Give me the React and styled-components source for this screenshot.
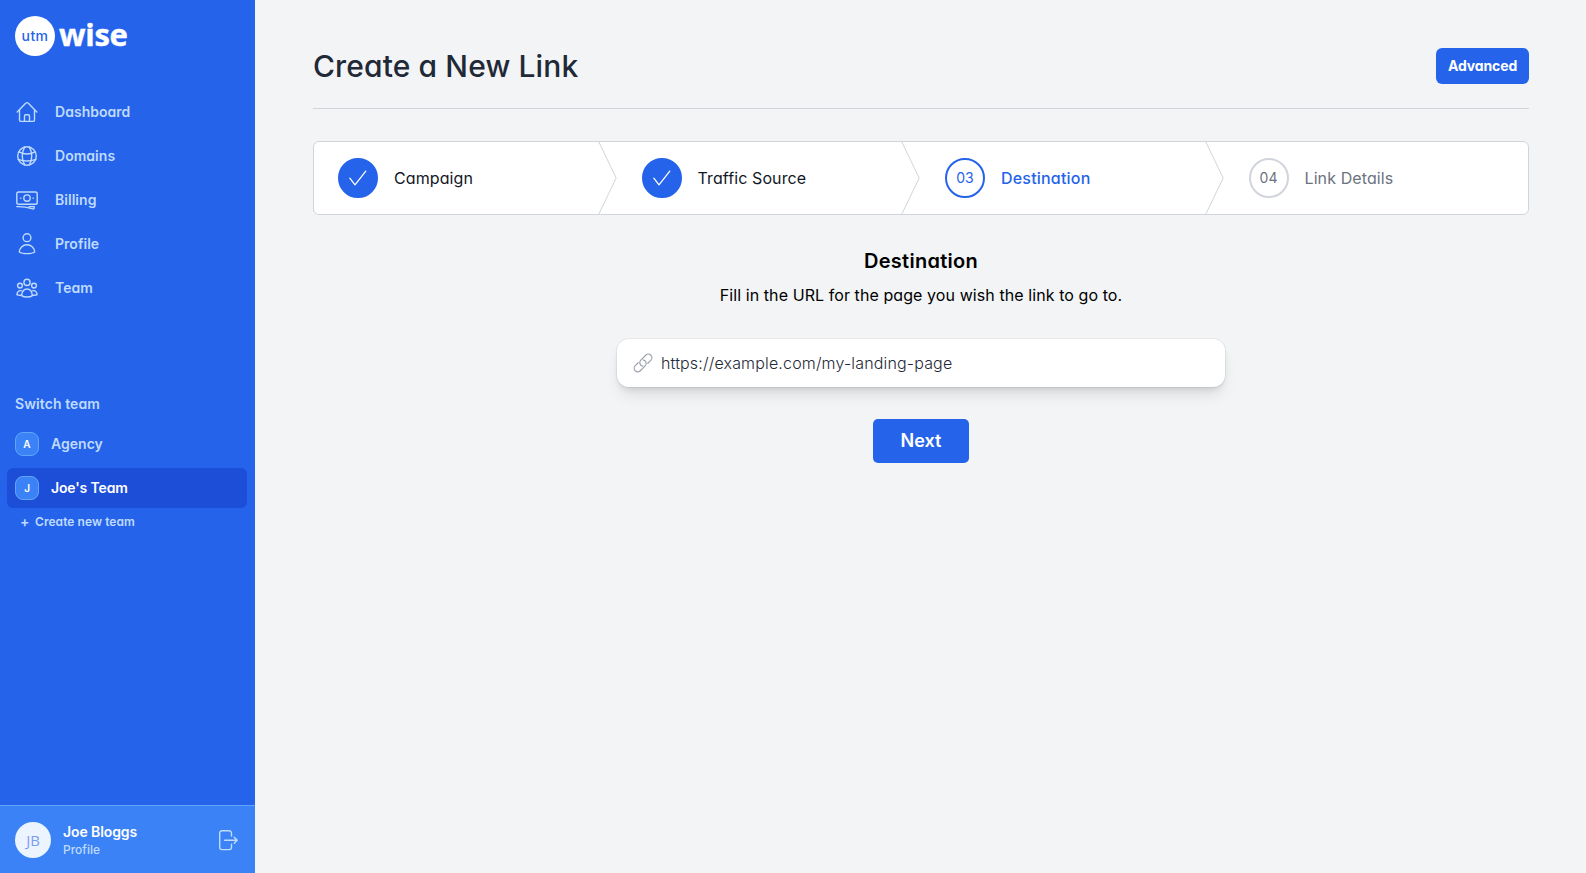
import React from "react";
import styled, { createGlobalStyle } from "styled-components";

const Global = createGlobalStyle`
  *, *::before, *::after { box-sizing: border-box; }
  body {
    margin: 0;
    background: #f3f4f6;
    color: #000;
    font-family: Inter, "Liberation Sans", sans-serif;
    font-feature-settings: "cv11";
    font-size: 16px;
    line-height: 24px;
  }
  h1, h2, p { margin: 0; }
  button { font: inherit; font-feature-settings: inherit; border: 0; padding: 0; }
  svg { display: block; flex: none; }
`;

const Page = styled.div`
  display: flex;
  height: 100vh;
  min-height: 600px;
`;

const Sidebar = styled.aside`
  display: flex;
  flex-direction: column;
  flex: none;
  width: 255px;
  background: #2563eb;
  color: #bfdbfe;
`;

const Logo = styled.div`
  display: flex;
  align-items: center;
  gap: 4px;
  padding: 16px 15px 0;
  height: 56px;
`;

const LogoMark = styled.span`
  display: grid;
  place-items: center;
  width: 40px;
  height: 40px;
  border-radius: 50%;
  background: #fff;
  color: #2563eb;
  font-size: 14px;
  font-weight: 500;
  letter-spacing: 0.4px;
`;

const LogoText = styled.span`
  color: #fff;
  font-family: "Open Sans", "Noto Sans", sans-serif;
  font-size: 31px;
  font-weight: 700;
  line-height: 40px;
  letter-spacing: -0.3px;
  margin-top: -4px;
  -webkit-text-stroke: 0.4px #fff;
`;

const Nav = styled.nav`
  display: flex;
  flex-direction: column;
  gap: 4px;
  padding: 0 8px 0 7px;
  margin-top: ${(p) => p.$top}px;
`;

const NavItem = styled.a`
  display: flex;
  align-items: center;
  gap: ${(p) => p.$gap}px;
  height: 40px;
  padding: 0 8px;
  border-radius: 6px;
  background: ${(p) => (p.$active ? "#1d4ed8" : "transparent")};
  color: ${(p) => (p.$active ? "#fff" : "#bfdbfe")};
  font-size: 14px;
  line-height: 20px;
  font-weight: 600;
  letter-spacing: ${(p) => (p.$active ? "-0.14px" : "0.03px")};
`;

const SectionLabel = styled.div`
  margin-top: 86px;
  padding: 0 15px;
  font-size: 14px;
  line-height: 20px;
  font-weight: 600;
  letter-spacing: 0.08px;
`;

const TeamBadge = styled.span`
  display: grid;
  place-items: center;
  width: 24px;
  height: 24px;
  border: 1px solid #60a5fa;
  border-radius: 8px;
  background: #3b82f6;
  color: #fff;
  font-size: 10px;
  line-height: 12px;
  font-weight: 600;
`;

const CreateTeam = styled.a`
  display: flex;
  align-items: center;
  gap: 6px;
  margin-top: 6px;
  padding-left: 20px;
  font-size: 12px;
  line-height: 16px;
  font-weight: 600;
  letter-spacing: 0.06px;
`;

const PlusSign = styled.span`
  width: 9px;
  font-size: 14px;
  text-align: center;
`;

const UserBar = styled.div`
  display: flex;
  align-items: center;
  height: 68px;
  margin-top: auto;
  padding: 0 15px;
  border-top: 1px solid #60a5fa;
  background: #3b82f6;
`;

const Avatar = styled.span`
  display: grid;
  place-items: center;
  width: 36px;
  height: 36px;
  border-radius: 50%;
  background: #ebf4ff;
  color: #7f9cf5;
  font-family: "Open Sans", sans-serif;
  font-size: 15px;
`;

const UserText = styled.div`
  flex: 1;
  margin-left: 12px;
`;

const UserName = styled.div`
  color: #fff;
  font-size: 14px;
  line-height: 20px;
  font-weight: 600;
  letter-spacing: -0.1px;
`;

const UserLink = styled.div`
  font-size: 12px;
  line-height: 16px;
  font-weight: 500;
`;

const Main = styled.main`
  flex: 1;
  padding: 48px 57px 0 58px;
`;

const Header = styled.header`
  display: flex;
  justify-content: space-between;
  align-items: flex-start;
  height: 61px;
  border-bottom: 1px solid #d1d5db;
`;

const Title = styled.h1`
  font-size: 30px;
  line-height: 36px;
  font-weight: 550;
  letter-spacing: 0.12px;
  color: #1f2937;
`;

const Button = styled.button`
  display: grid;
  place-items: center;
  width: ${(p) => (p.$large ? 96 : 93)}px;
  height: ${(p) => (p.$large ? 44 : 36)}px;
  border-radius: ${(p) => (p.$large ? 5 : 6)}px;
  background: #2563eb;
  color: #fff;
  font-size: ${(p) => (p.$large ? 18 : 14)}px;
  line-height: 20px;
  font-weight: ${(p) => (p.$large ? 600 : 700)};
  letter-spacing: ${(p) => (p.$large ? 0 : "-0.12px")};
`;

const Steps = styled.ol`
  display: flex;
  list-style: none;
  margin: 32px 0 0;
  padding: 0;
  height: 74px;
  border: 1px solid #d1d5db;
  border-radius: 6px;
  background: #fff;
`;

const Step = styled.li`
  display: flex;
  flex: 1;
  align-items: center;
  padding-left: 24px;
`;

const stepColors = { done: "#111827", current: "#2563eb", upcoming: "#6b7280" };

const StepCircle = styled.span`
  display: grid;
  place-items: center;
  width: 40px;
  height: 40px;
  border-radius: 50%;
  border: 2px solid ${(p) => (p.$state === "upcoming" ? "#d1d5db" : "#2563eb")};
  background: ${(p) => (p.$state === "done" ? "#2563eb" : "transparent")};
  color: ${(p) => (p.$state === "done" ? "#fff" : stepColors[p.$state])};
  font-size: 14px;
  line-height: 20px;
`;

const StepLabel = styled.span`
  flex: 1;
  margin-left: 16px;
  color: ${(p) => stepColors[p.$state]};
  font-weight: ${(p) => (p.$state === "current" ? 500 : 400)};
  letter-spacing: ${(p) => (p.$state === "current" ? 0.2 : 0.1)}px;
`;

const Form = styled.section`
  display: flex;
  flex-direction: column;
  align-items: center;
  padding-top: 32px;
`;

const FormTitle = styled.h2`
  font-size: 20px;
  line-height: 28px;
  font-weight: 600;
  letter-spacing: 0.28px;
`;

const FormText = styled.p`
  margin-top: 8px;
  letter-spacing: 0.08px;
`;

const Field = styled.label`
  display: flex;
  align-items: center;
  gap: 8px;
  width: 608px;
  height: 48px;
  margin: 32px 0 32px;
  padding: 0 16px;
  border-radius: 12px;
  background: #fff;
  box-shadow: 0 0 0 1px rgba(0, 0, 0, 0.05), 0 10px 15px -3px rgba(0, 0, 0, 0.1),
    0 4px 6px -2px rgba(0, 0, 0, 0.1);
`;

const FieldInput = styled.input`
  flex: 1;
  padding: 0;
  border: 0;
  outline: none;
  background: transparent;
  color: #1f2937;
  font-family: Inter, sans-serif;
  font-feature-settings: normal;
  font-size: 16px;
  font-weight: 300;
  line-height: 24px;
  letter-spacing: 0.16px;
`;

const Icon = ({ children, size = 24, width = 1.4, color = "currentColor" }) => (
  <svg
    width={size}
    height={size}
    viewBox={`0 0 ${size} ${size}`}
    fill="none"
    stroke={color}
    strokeWidth={width}
    strokeLinecap="round"
    strokeLinejoin="round"
  >
    {children}
  </svg>
);

const HomeIcon = () => (
  <Icon>
    <path d="M2.2 11.9l8.7-8.8a1.5 1.5 0 0 1 2.2 0l8.7 8.8" />
    <path d="M4.5 9.9v10a1.5 1.5 0 0 0 1.5 1.5h12a1.5 1.5 0 0 0 1.5-1.5V9.9" />
    <path d="M9.5 21.2v-5.1a1.3 1.3 0 0 1 1.3-1.3h2.4a1.3 1.3 0 0 1 1.3 1.3v5.1" />
  </Icon>
);

const GlobeIcon = () => (
  <Icon>
    <circle cx="12" cy="12" r="9.3" />
    <path d="M9.7 2.9C6.7 8.5 6.7 15.5 9.7 21.1M14.3 2.9C17.3 8.5 17.3 15.5 14.3 21.1" />
    <path d="M3.9 7.8C8.7 10.4 15.3 10.4 20.1 7.8M3.2 15.4C8.2 17.2 15.8 17.2 20.8 15.4" />
  </Icon>
);

const BillingIcon = () => (
  <Icon>
    <rect x="1.8" y="4" width="20.4" height="12.2" rx="1.8" />
    <circle cx="12" cy="10.1" r="3.2" />
    <path d="M5.5 10.1h.5M18 10.1h.5" />
    <path d="M1.8 18.6C8 18.4 13 19.4 17.7 20.9a1.1 1.1 0 0 0 1.5-1.1V18.6H14" />
  </Icon>
);

const ProfileIcon = () => (
  <Icon>
    <circle cx="12" cy="5.7" r="3.9" />
    <path d="M12 12.8c-4.3 0-7.6 3.2-7.7 7.2C7.5 22.2 16.5 22.2 19.7 20C19.6 16 16.3 12.8 12 12.8z" />
  </Icon>
);

const TeamIcon = () => (
  <Icon>
    <circle cx="12" cy="6.4" r="3.1" />
    <circle cx="5" cy="9.6" r="2.4" />
    <circle cx="19" cy="9.6" r="2.4" />
    <path d="M12 13c-2.900 0-5 2.500-5.400 6.600c2.400 1.900 8.400 1.900 10.800 0C17 15.500 14.900 13 12 13z" />
    <path d="M6.200 14.700c-2.400-.3-3.900 1.200-4.300 3.900c1 .7 2.700.8 4.400.6M17.800 14.700c2.400-.3 3.900 1.200 4.300 3.900c-1 .7-2.700.8-4.400.6" />
  </Icon>
);

const LogoutIcon = () => (
  <Icon>
    <path d="M15.500 8V5.100a2.300 2.300 0 0 0-2.300-2.300H6A2.300 2.300 0 0 0 3.700 5.100v14.200a2.300 2.300 0 0 0 2.300 2.300h7.200a2.300 2.300 0 0 0 2.300-2.300v-3" />
    <path d="M8.500 12.200H21M18.200 9.200l3 3-3 3" />
  </Icon>
);

const LinkIcon = () => (
  <Icon size={20} width={1.2} color="#9ca3af">
    <g transform="translate(10 10) rotate(-45)">
      <path d="M3.2 3.6H7.4a3.6 3.6 0 0 0 0-7.2H.5A3.6 3.6 0 0 0-2.4 2.1" />
      <path d="M-3.2-3.6H-7.4a3.6 3.6 0 0 0 0 7.2H-.5A3.6 3.6 0 0 0 2.4-2.1" />
    </g>
  </Icon>
);

const CheckIcon = () => (
  <Icon width={1.3}>
    <path d="M3.8 12.2l5.2 6.6L19.8 5.2" />
  </Icon>
);

const StepArrow = () => (
  <svg width="20" height="72" viewBox="0 0 22 80" preserveAspectRatio="none" fill="none" stroke="#d1d5db">
    <path d="M0 -2L20 40L0 82" vectorEffect="non-scaling-stroke" strokeLinejoin="round" />
  </svg>
);

const links = [
  ["Dashboard", HomeIcon],
  ["Domains", GlobeIcon],
  ["Billing", BillingIcon],
  ["Profile", ProfileIcon],
  ["Team", TeamIcon],
];

const steps = [
  ["Campaign", "done"],
  ["Traffic Source", "done"],
  ["Destination", "current"],
  ["Link Details", "upcoming"],
];

export default function App() {
  return (
    <Page>
      <Global />
      <Sidebar>
        <Logo>
          <LogoMark>utm</LogoMark>
          <LogoText>wise</LogoText>
        </Logo>
        <Nav $top={36}>
          {links.map(([label, Glyph]) => (
            <NavItem key={label} $gap={16}>
              <Glyph />
              {label}
            </NavItem>
          ))}
        </Nav>
        <SectionLabel>Switch team</SectionLabel>
        <Nav $top={10}>
          <NavItem $gap={12}>
            <TeamBadge>A</TeamBadge>
            Agency
          </NavItem>
          <NavItem $gap={12} $active>
            <TeamBadge>J</TeamBadge>
            Joe's Team
          </NavItem>
        </Nav>
        <CreateTeam>
          <PlusSign>+</PlusSign>
          <span>Create new team</span>
        </CreateTeam>
        <UserBar>
          <Avatar>JB</Avatar>
          <UserText>
            <UserName>Joe Bloggs</UserName>
            <UserLink>Profile</UserLink>
          </UserText>
          <LogoutIcon />
        </UserBar>
      </Sidebar>
      <Main>
        <Header>
          <Title>Create a New Link</Title>
          <Button>Advanced</Button>
        </Header>
        <Steps>
          {steps.map(([label, state], i) => (
            <Step key={label}>
              <StepCircle $state={state}>{state === "done" ? <CheckIcon /> : `0${i + 1}`}</StepCircle>
              <StepLabel $state={state}>{label}</StepLabel>
              {i < steps.length - 1 && <StepArrow />}
            </Step>
          ))}
        </Steps>
        <Form>
          <FormTitle>Destination</FormTitle>
          <FormText>Fill in the URL for the page you wish the link to go to.</FormText>
          <Field>
            <LinkIcon />
            <FieldInput defaultValue="https://example.com/my-landing-page" />
          </Field>
          <Button $large>Next</Button>
        </Form>
      </Main>
    </Page>
  );
}
